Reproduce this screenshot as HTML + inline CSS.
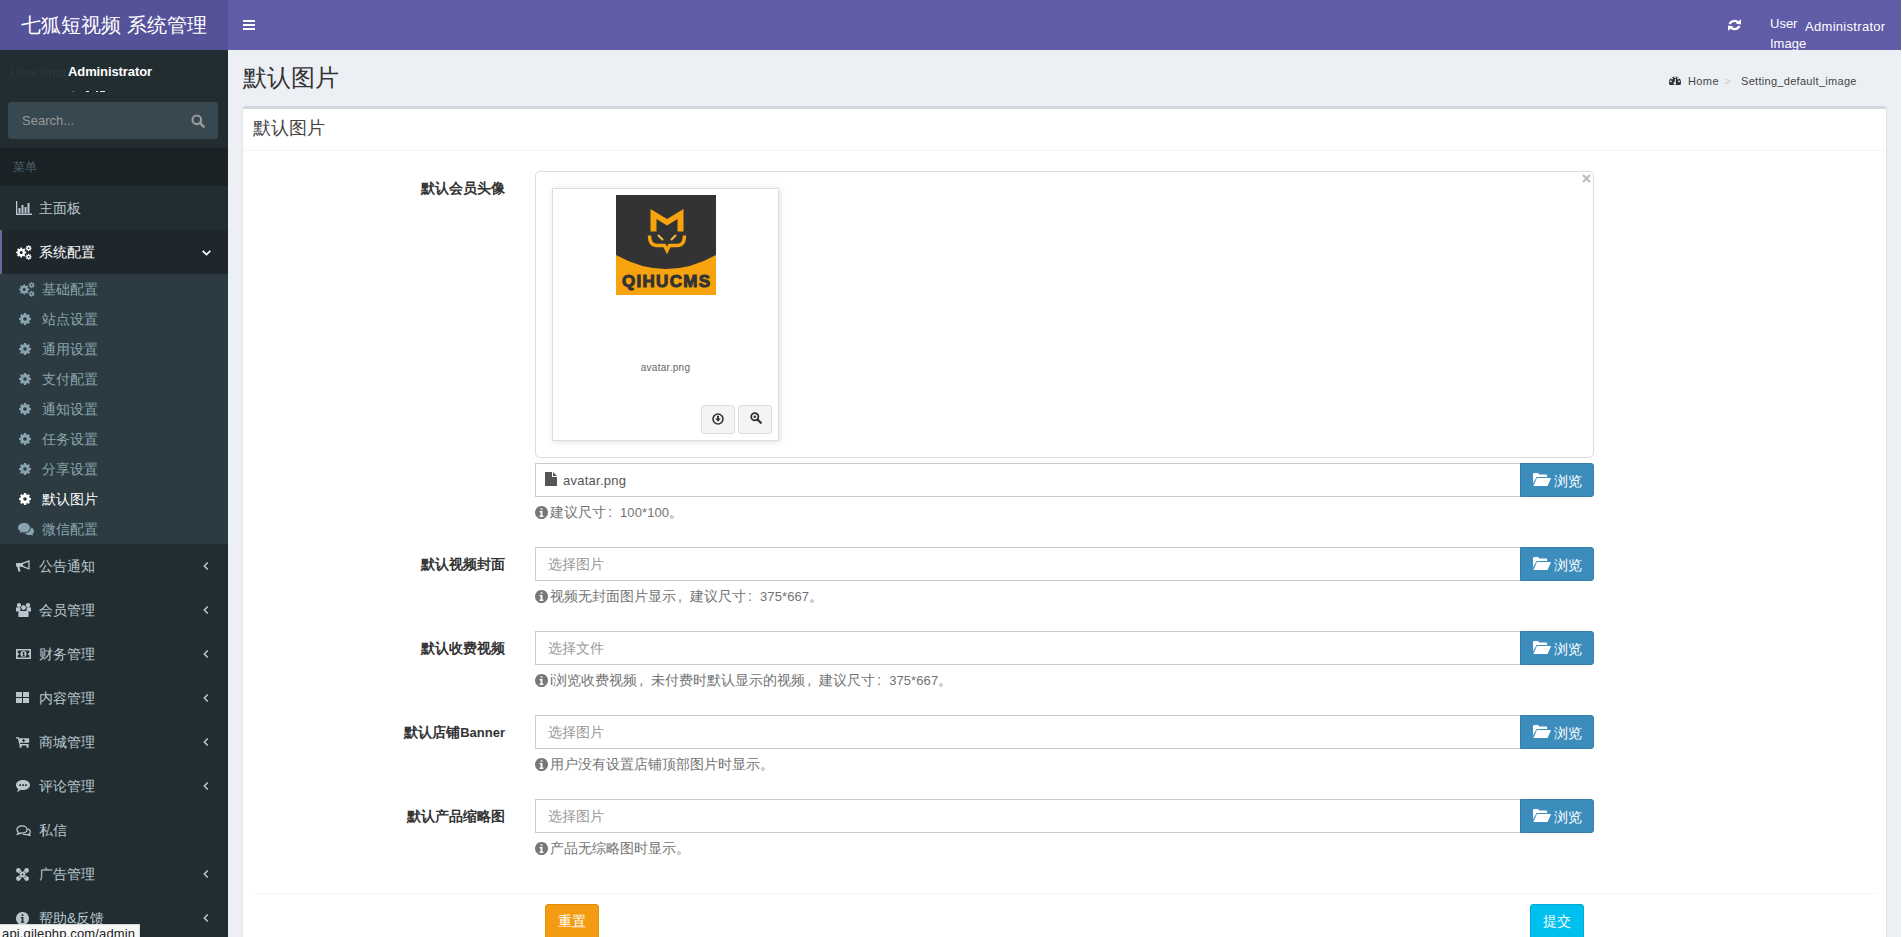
<!DOCTYPE html>
<html><head><meta charset="utf-8">
<style>
*{box-sizing:border-box;margin:0;padding:0}
html,body{width:1902px;height:937px;overflow:hidden;background:#fff;font-family:"Liberation Sans",sans-serif;font-size:14px;color:#333}
.abs{position:absolute}
#logo{left:0;top:0;width:228px;height:50px;background:#555299;color:#fff;font-size:20px;line-height:50px;padding-left:21px;white-space:nowrap}
#nav{z-index:5;left:228px;top:0;width:1673px;height:50px;background:#605ca8;color:#fff}
#side{left:0;top:50px;width:228px;height:887px;background:#222d32;overflow:hidden}
#content{left:228px;top:50px;width:1673px;height:887px;background:#ecf0f5}
.mi{position:absolute;left:0;width:228px;height:44px;white-space:nowrap}
.mi .t{position:absolute;left:39px;top:0;line-height:44px;font-size:14px}
.mi .ic{position:absolute}
.mi .ch{position:absolute}
.tv{background:#2c3b41;height:270px}
.ti{position:absolute;left:0;width:228px;height:30px;white-space:nowrap}
.ti .t{position:absolute;left:42px;top:0;line-height:30px;font-size:14px}
.ti .ic{position:absolute}
.lbl{font-weight:bold;font-size:14px;line-height:20px;color:#333;white-space:nowrap}
.hb{font-size:14px;line-height:20px;color:#737373;white-space:nowrap;display:flex;align-items:center}
.hb svg{margin-right:2px}
.inp{border:1px solid #ccc;background:#fff}
.ph{font-size:14px;line-height:20px;color:#999;white-space:nowrap}
.btnp{width:74px;height:34px;background:#3c8dbc;border:1px solid #367fa9;border-radius:0 3px 3px 0;color:#fff;font-size:14px;white-space:nowrap}
.kbtn{width:34px;height:29px;background:#f4f4f4;border:1px solid #ddd;border-radius:3px}
</style></head>
<body>
<div id="logo" class="abs">七狐短视频 系统管理</div>
<div id="nav" class="abs"><div class="abs" style="left:15px;top:20px;width:12px;height:2px;background:#fff"></div>
<div class="abs" style="left:15px;top:24px;width:12px;height:2px;background:#fff"></div>
<div class="abs" style="left:15px;top:28px;width:12px;height:2px;background:#fff"></div>
<div class="abs" style="left:1500px;top:19px;color:#fff"><svg width="13" height="12" viewBox="0 0 13 12" style="display:block"><path fill="none" stroke="currentColor" stroke-width="2.3" d="M1.6,5.2A5,4.6 0 0,1 10.2,3.6 M11.4,6.8A5,4.6 0 0,1 2.8,8.4"/><path fill="currentColor" d="M7.6,4.6L13,0.3V5.6Z M5.4,7.4L0,11.7V6.4Z"/></svg></div>
<div class="abs" style="left:1542px;top:9px;font-size:13px;line-height:30px;color:#fff">User</div><div class="abs" style="left:1542px;top:29px;font-size:13px;line-height:30px;color:#fff">Image</div>
<div class="abs" style="left:1577px;top:12px;font-size:13px;line-height:30px;color:#fff;letter-spacing:0.3px;white-space:nowrap">Administrator</div></div>
<div id="side" class="abs"><div class="abs" style="left:10px;top:15px;color:#2b373d;font-size:13px;white-space:nowrap;width:57px;overflow:hidden">User Image</div>
<div class="abs" style="left:68px;top:7px;line-height:30px;color:#fff;font-weight:bold;font-size:13px;white-space:nowrap;letter-spacing:-0.1px">Administrator</div>
<div class="abs" style="left:68px;top:41px;width:40px;height:1px;overflow:hidden"><div style="position:absolute;left:4px;top:0;width:3px;height:1px;background:#4a5a50"></div><div style="position:absolute;left:18px;top:0;width:3px;height:1px;background:#eee"></div><div style="position:absolute;left:28px;top:0;width:2px;height:1px;background:#eee"></div><div style="position:absolute;left:32px;top:0;width:5px;height:1px;background:#eee"></div></div>
<div class="abs" style="left:8px;top:52px;width:210px;height:37px;background:#374850;border-radius:3px"></div>
<div class="abs" style="left:22px;top:56px;line-height:30px;color:#999;font-size:13px">Search...</div>
<div class="abs" style="left:191px;top:64px;color:#999"><svg width="14" height="14" viewBox="0 0 14 14" style="display:block"><circle cx="5.8" cy="5.8" r="4.3" fill="none" stroke="currentColor" stroke-width="2.2"/><path stroke="currentColor" stroke-width="2.6" stroke-linecap="round" d="M9.2,9.2L12.6,12.6"/></svg></div>
<div class="abs" style="left:0;top:98px;width:228px;height:38px;background:#1a2226;color:#4b646f;font-size:12px;line-height:38px;padding-left:13px">菜单</div>
<div class="mi" style="top:136px;color:#b8c7ce"><div class="ic" style="left:16px;top:15px"><svg width="16" height="14" viewBox="0 0 16 14" style="display:block"><path fill="currentColor" d="M0,0h1.3v12.6H16V14H0Z M2.5,7h2v5h-2Z M5.5,4h2v8h-2Z M8.5,6h2v6h-2Z M11.5,2h2v10h-2Z"/></svg></div><div class="t">主面板</div></div>
<div class="abs" style="left:0;top:180px;width:228px;height:44px;background:#1e282c;border-left:2px solid #6b68a0"></div>
<div class="mi" style="top:180px;color:#fff"><div class="ic" style="left:16px;top:15px"><svg width="16" height="15" viewBox="0 0 16 15" style="display:block"><path fill-rule="evenodd" fill="currentColor" d="M4.17,3.84 L4.40,2.46 L6.00,2.46 L6.23,3.84 L7.06,4.18 L8.20,3.37 L9.33,4.50 L8.52,5.64 L8.86,6.47 L10.24,6.70 L10.24,8.30 L8.86,8.53 L8.52,9.36 L9.33,10.50 L8.20,11.63 L7.06,10.82 L6.23,11.16 L6.00,12.54 L4.40,12.54 L4.17,11.16 L3.34,10.82 L2.20,11.63 L1.07,10.50 L1.88,9.36 L1.54,8.53 L0.16,8.30 L0.16,6.70 L1.54,6.47 L1.88,5.64 L1.07,4.50 L2.20,3.37 L3.34,4.18Z M3.60,7.50 a1.60,1.60 0 1,0 3.20,0 a1.60,1.60 0 1,0 -3.20,0Z M12.00,1.08 L12.13,0.24 L13.07,0.24 L13.20,1.08 L13.67,1.28 L14.36,0.77 L15.03,1.44 L14.52,2.13 L14.72,2.60 L15.56,2.73 L15.56,3.67 L14.72,3.80 L14.52,4.27 L15.03,4.96 L14.36,5.63 L13.67,5.12 L13.20,5.32 L13.07,6.16 L12.13,6.16 L12.00,5.32 L11.53,5.12 L10.84,5.63 L10.17,4.96 L10.68,4.27 L10.48,3.80 L9.64,3.67 L9.64,2.73 L10.48,2.60 L10.68,2.13 L10.17,1.44 L10.84,0.77 L11.53,1.28Z M11.70,3.20 a0.90,0.90 0 1,0 1.80,0 a0.90,0.90 0 1,0 -1.80,0Z M12.00,9.68 L12.13,8.84 L13.07,8.84 L13.20,9.68 L13.67,9.88 L14.36,9.37 L15.03,10.04 L14.52,10.73 L14.72,11.20 L15.56,11.33 L15.56,12.27 L14.72,12.40 L14.52,12.87 L15.03,13.56 L14.36,14.23 L13.67,13.72 L13.20,13.92 L13.07,14.76 L12.13,14.76 L12.00,13.92 L11.53,13.72 L10.84,14.23 L10.17,13.56 L10.68,12.87 L10.48,12.40 L9.64,12.27 L9.64,11.33 L10.48,11.20 L10.68,10.73 L10.17,10.04 L10.84,9.37 L11.53,9.88Z M11.70,11.80 a0.90,0.90 0 1,0 1.80,0 a0.90,0.90 0 1,0 -1.80,0Z"/></svg></div><div class="t">系统配置</div><div class="ch" style="left:202px;top:20px"><svg width="9" height="6" viewBox="0 0 9 6" style="display:block"><path fill="none" stroke="currentColor" stroke-width="1.7" d="M0.7,0.8L4.5,4.6L8.3,0.8"/></svg></div></div>
<div class="abs tv" style="left:0;top:224px;width:228px"></div>
<div class="ti" style="top:224px;color:#8aa4af"><div class="ic" style="left:19px;top:8px"><svg width="16" height="15" viewBox="0 0 16 15" style="display:block"><path fill-rule="evenodd" fill="currentColor" d="M4.17,3.84 L4.40,2.46 L6.00,2.46 L6.23,3.84 L7.06,4.18 L8.20,3.37 L9.33,4.50 L8.52,5.64 L8.86,6.47 L10.24,6.70 L10.24,8.30 L8.86,8.53 L8.52,9.36 L9.33,10.50 L8.20,11.63 L7.06,10.82 L6.23,11.16 L6.00,12.54 L4.40,12.54 L4.17,11.16 L3.34,10.82 L2.20,11.63 L1.07,10.50 L1.88,9.36 L1.54,8.53 L0.16,8.30 L0.16,6.70 L1.54,6.47 L1.88,5.64 L1.07,4.50 L2.20,3.37 L3.34,4.18Z M3.60,7.50 a1.60,1.60 0 1,0 3.20,0 a1.60,1.60 0 1,0 -3.20,0Z M12.00,1.08 L12.13,0.24 L13.07,0.24 L13.20,1.08 L13.67,1.28 L14.36,0.77 L15.03,1.44 L14.52,2.13 L14.72,2.60 L15.56,2.73 L15.56,3.67 L14.72,3.80 L14.52,4.27 L15.03,4.96 L14.36,5.63 L13.67,5.12 L13.20,5.32 L13.07,6.16 L12.13,6.16 L12.00,5.32 L11.53,5.12 L10.84,5.63 L10.17,4.96 L10.68,4.27 L10.48,3.80 L9.64,3.67 L9.64,2.73 L10.48,2.60 L10.68,2.13 L10.17,1.44 L10.84,0.77 L11.53,1.28Z M11.70,3.20 a0.90,0.90 0 1,0 1.80,0 a0.90,0.90 0 1,0 -1.80,0Z M12.00,9.68 L12.13,8.84 L13.07,8.84 L13.20,9.68 L13.67,9.88 L14.36,9.37 L15.03,10.04 L14.52,10.73 L14.72,11.20 L15.56,11.33 L15.56,12.27 L14.72,12.40 L14.52,12.87 L15.03,13.56 L14.36,14.23 L13.67,13.72 L13.20,13.92 L13.07,14.76 L12.13,14.76 L12.00,13.92 L11.53,13.72 L10.84,14.23 L10.17,13.56 L10.68,12.87 L10.48,12.40 L9.64,12.27 L9.64,11.33 L10.48,11.20 L10.68,10.73 L10.17,10.04 L10.84,9.37 L11.53,9.88Z M11.70,11.80 a0.90,0.90 0 1,0 1.80,0 a0.90,0.90 0 1,0 -1.80,0Z"/></svg></div><div class="t">基础配置</div></div>
<div class="ti" style="top:254px;color:#8aa4af"><div class="ic" style="left:19px;top:9px"><svg width="13" height="13" viewBox="0 0 13 13" style="display:block"><path fill-rule="evenodd" fill="currentColor" d="M4.72,1.48 L4.95,0.09 L7.05,0.09 L7.28,1.48 L8.30,1.90 L9.43,1.08 L10.92,2.57 L10.10,3.70 L10.52,4.72 L11.91,4.95 L11.91,7.05 L10.52,7.28 L10.10,8.30 L10.92,9.43 L9.43,10.92 L8.30,10.10 L7.28,10.52 L7.05,11.91 L4.95,11.91 L4.72,10.52 L3.70,10.10 L2.57,10.92 L1.08,9.43 L1.90,8.30 L1.48,7.28 L0.09,7.05 L0.09,4.95 L1.48,4.72 L1.90,3.70 L1.08,2.57 L2.57,1.08 L3.70,1.90Z M4.20,6.00 a1.80,1.80 0 1,0 3.60,0 a1.80,1.80 0 1,0 -3.60,0Z"/></svg></div><div class="t">站点设置</div></div>
<div class="ti" style="top:284px;color:#8aa4af"><div class="ic" style="left:19px;top:9px"><svg width="13" height="13" viewBox="0 0 13 13" style="display:block"><path fill-rule="evenodd" fill="currentColor" d="M4.72,1.48 L4.95,0.09 L7.05,0.09 L7.28,1.48 L8.30,1.90 L9.43,1.08 L10.92,2.57 L10.10,3.70 L10.52,4.72 L11.91,4.95 L11.91,7.05 L10.52,7.28 L10.10,8.30 L10.92,9.43 L9.43,10.92 L8.30,10.10 L7.28,10.52 L7.05,11.91 L4.95,11.91 L4.72,10.52 L3.70,10.10 L2.57,10.92 L1.08,9.43 L1.90,8.30 L1.48,7.28 L0.09,7.05 L0.09,4.95 L1.48,4.72 L1.90,3.70 L1.08,2.57 L2.57,1.08 L3.70,1.90Z M4.20,6.00 a1.80,1.80 0 1,0 3.60,0 a1.80,1.80 0 1,0 -3.60,0Z"/></svg></div><div class="t">通用设置</div></div>
<div class="ti" style="top:314px;color:#8aa4af"><div class="ic" style="left:19px;top:9px"><svg width="13" height="13" viewBox="0 0 13 13" style="display:block"><path fill-rule="evenodd" fill="currentColor" d="M4.72,1.48 L4.95,0.09 L7.05,0.09 L7.28,1.48 L8.30,1.90 L9.43,1.08 L10.92,2.57 L10.10,3.70 L10.52,4.72 L11.91,4.95 L11.91,7.05 L10.52,7.28 L10.10,8.30 L10.92,9.43 L9.43,10.92 L8.30,10.10 L7.28,10.52 L7.05,11.91 L4.95,11.91 L4.72,10.52 L3.70,10.10 L2.57,10.92 L1.08,9.43 L1.90,8.30 L1.48,7.28 L0.09,7.05 L0.09,4.95 L1.48,4.72 L1.90,3.70 L1.08,2.57 L2.57,1.08 L3.70,1.90Z M4.20,6.00 a1.80,1.80 0 1,0 3.60,0 a1.80,1.80 0 1,0 -3.60,0Z"/></svg></div><div class="t">支付配置</div></div>
<div class="ti" style="top:344px;color:#8aa4af"><div class="ic" style="left:19px;top:9px"><svg width="13" height="13" viewBox="0 0 13 13" style="display:block"><path fill-rule="evenodd" fill="currentColor" d="M4.72,1.48 L4.95,0.09 L7.05,0.09 L7.28,1.48 L8.30,1.90 L9.43,1.08 L10.92,2.57 L10.10,3.70 L10.52,4.72 L11.91,4.95 L11.91,7.05 L10.52,7.28 L10.10,8.30 L10.92,9.43 L9.43,10.92 L8.30,10.10 L7.28,10.52 L7.05,11.91 L4.95,11.91 L4.72,10.52 L3.70,10.10 L2.57,10.92 L1.08,9.43 L1.90,8.30 L1.48,7.28 L0.09,7.05 L0.09,4.95 L1.48,4.72 L1.90,3.70 L1.08,2.57 L2.57,1.08 L3.70,1.90Z M4.20,6.00 a1.80,1.80 0 1,0 3.60,0 a1.80,1.80 0 1,0 -3.60,0Z"/></svg></div><div class="t">通知设置</div></div>
<div class="ti" style="top:374px;color:#8aa4af"><div class="ic" style="left:19px;top:9px"><svg width="13" height="13" viewBox="0 0 13 13" style="display:block"><path fill-rule="evenodd" fill="currentColor" d="M4.72,1.48 L4.95,0.09 L7.05,0.09 L7.28,1.48 L8.30,1.90 L9.43,1.08 L10.92,2.57 L10.10,3.70 L10.52,4.72 L11.91,4.95 L11.91,7.05 L10.52,7.28 L10.10,8.30 L10.92,9.43 L9.43,10.92 L8.30,10.10 L7.28,10.52 L7.05,11.91 L4.95,11.91 L4.72,10.52 L3.70,10.10 L2.57,10.92 L1.08,9.43 L1.90,8.30 L1.48,7.28 L0.09,7.05 L0.09,4.95 L1.48,4.72 L1.90,3.70 L1.08,2.57 L2.57,1.08 L3.70,1.90Z M4.20,6.00 a1.80,1.80 0 1,0 3.60,0 a1.80,1.80 0 1,0 -3.60,0Z"/></svg></div><div class="t">任务设置</div></div>
<div class="ti" style="top:404px;color:#8aa4af"><div class="ic" style="left:19px;top:9px"><svg width="13" height="13" viewBox="0 0 13 13" style="display:block"><path fill-rule="evenodd" fill="currentColor" d="M4.72,1.48 L4.95,0.09 L7.05,0.09 L7.28,1.48 L8.30,1.90 L9.43,1.08 L10.92,2.57 L10.10,3.70 L10.52,4.72 L11.91,4.95 L11.91,7.05 L10.52,7.28 L10.10,8.30 L10.92,9.43 L9.43,10.92 L8.30,10.10 L7.28,10.52 L7.05,11.91 L4.95,11.91 L4.72,10.52 L3.70,10.10 L2.57,10.92 L1.08,9.43 L1.90,8.30 L1.48,7.28 L0.09,7.05 L0.09,4.95 L1.48,4.72 L1.90,3.70 L1.08,2.57 L2.57,1.08 L3.70,1.90Z M4.20,6.00 a1.80,1.80 0 1,0 3.60,0 a1.80,1.80 0 1,0 -3.60,0Z"/></svg></div><div class="t">分享设置</div></div>
<div class="ti" style="top:434px;color:#fff"><div class="ic" style="left:19px;top:9px"><svg width="13" height="13" viewBox="0 0 13 13" style="display:block"><path fill-rule="evenodd" fill="currentColor" d="M4.72,1.48 L4.95,0.09 L7.05,0.09 L7.28,1.48 L8.30,1.90 L9.43,1.08 L10.92,2.57 L10.10,3.70 L10.52,4.72 L11.91,4.95 L11.91,7.05 L10.52,7.28 L10.10,8.30 L10.92,9.43 L9.43,10.92 L8.30,10.10 L7.28,10.52 L7.05,11.91 L4.95,11.91 L4.72,10.52 L3.70,10.10 L2.57,10.92 L1.08,9.43 L1.90,8.30 L1.48,7.28 L0.09,7.05 L0.09,4.95 L1.48,4.72 L1.90,3.70 L1.08,2.57 L2.57,1.08 L3.70,1.90Z M4.20,6.00 a1.80,1.80 0 1,0 3.60,0 a1.80,1.80 0 1,0 -3.60,0Z"/></svg></div><div class="t">默认图片</div></div>
<div class="ti" style="top:464px;color:#8aa4af"><div class="ic" style="left:18px;top:9px"><svg width="16" height="13" viewBox="0 0 16 13" style="display:block"><path fill="currentColor" d="M6,0C9.3,0 12,2.1 12,4.7C12,7.3 9.3,9.4 6,9.4C5.3,9.4 4.7,9.3 4.1,9.1L2,10.2L2.5,8.3C0.9,7.4 0,6.1 0,4.7C0,2.1 2.7,0 6,0Z"/><path fill="currentColor" d="M12.8,4.3C14.7,5 16,6.5 16,8.2C16,9.3 15.5,10.3 14.6,11L15,12.8L13.1,11.8C12.5,12 11.9,12 11.3,12C9.4,12 7.8,11.3 6.9,10.2C10.3,10 12.9,7.8 12.9,5.1Z"/></svg></div><div class="t">微信配置</div></div>
<div class="mi" style="top:494px;color:#b8c7ce"><div class="ic" style="left:16px;top:16px"><svg width="14" height="12" viewBox="0 0 14 12" style="display:block"><path fill="currentColor" d="M1,3H6.5V6.8H3.4L4.6,11.6H2.4L1.2,6.8H1Q0,6.8 0,5.8V4Q0,3 1,3Z"/><path fill-rule="evenodd" fill="currentColor" d="M5.6,3.1L13.6,0V9.8L5.6,6.7Z M7,4.1V5.7L12.3,7.9V1.9Z"/></svg></div><div class="t">公告通知</div><div class="ch" style="left:203px;top:18px"><svg width="6" height="8" viewBox="0 0 6 8" style="display:block"><path fill="none" stroke="currentColor" stroke-width="1.5" d="M4.8,0.5L1.3,4L4.8,7.5"/></svg></div></div>
<div class="mi" style="top:538px;color:#b8c7ce"><div class="ic" style="left:16px;top:15px"><svg width="15" height="14" viewBox="0 0 15 14" style="display:block"><g fill="currentColor"><circle cx="3" cy="2.2" r="2.1"/><circle cx="12" cy="2.2" r="2.1"/><path d="M0,5.2Q0,4.3 1,4.3H4.4V8.4H0Z M10.6,4.3H14Q15,4.3 15,5.2V8.4H10.6Z M2.4,9.8Q2.4,8 4.6,8H10.4Q12.6,8 12.6,9.8V14H2.4Z"/></g><circle cx="7.5" cy="4.6" r="2.8" fill="#222d32"/><circle cx="7.5" cy="4.6" r="2.4" fill="currentColor"/></svg></div><div class="t">会员管理</div><div class="ch" style="left:203px;top:18px"><svg width="6" height="8" viewBox="0 0 6 8" style="display:block"><path fill="none" stroke="currentColor" stroke-width="1.5" d="M4.8,0.5L1.3,4L4.8,7.5"/></svg></div></div>
<div class="mi" style="top:582px;color:#b8c7ce"><div class="ic" style="left:16px;top:17px"><svg width="15" height="10" viewBox="0 0 15 10" style="display:block"><path fill-rule="evenodd" fill="currentColor" d="M0,0h15v10H0Z M1.6,1.6v6.8h11.8V1.6Z M1.6,3.2L3.2,5L1.6,6.8Z M13.4,3.2L11.8,5L13.4,6.8Z"/><circle cx="7.5" cy="5" r="3.1" fill="currentColor"/><path fill="#222d32" d="M7,2.9h1.3v3.6h0.8v0.9H6.3V6.5h0.7V4.2L6.4,4.6V3.6Z"/></svg></div><div class="t">财务管理</div><div class="ch" style="left:203px;top:18px"><svg width="6" height="8" viewBox="0 0 6 8" style="display:block"><path fill="none" stroke="currentColor" stroke-width="1.5" d="M4.8,0.5L1.3,4L4.8,7.5"/></svg></div></div>
<div class="mi" style="top:626px;color:#b8c7ce"><div class="ic" style="left:16px;top:16px"><svg width="13" height="11" viewBox="0 0 13 11" style="display:block"><path fill="currentColor" d="M0,0h6v5H0Z M7,0h6v5H7Z M0,6h6v5H0Z M7,6h6v5H7Z"/></svg></div><div class="t">内容管理</div><div class="ch" style="left:203px;top:18px"><svg width="6" height="8" viewBox="0 0 6 8" style="display:block"><path fill="none" stroke="currentColor" stroke-width="1.5" d="M4.8,0.5L1.3,4L4.8,7.5"/></svg></div></div>
<div class="mi" style="top:670px;color:#b8c7ce"><div class="ic" style="left:16px;top:17px"><svg width="14" height="12" viewBox="0 0 14 12" style="display:block"><path fill="currentColor" d="M0,0.2H2.8L3.3,1.2H13.2V5.8H4.1L4.3,6.9H12.6V10.8H10.6V8.4H5.6V10.8H3.6V8.4L1.9,1.4H0Z"/><path fill="#222d32" d="M7.1,2H8.1V3.1H9.2V4H8.1V5.1H7.1V4H6V3.1H7.1Z"/></svg></div><div class="t">商城管理</div><div class="ch" style="left:203px;top:18px"><svg width="6" height="8" viewBox="0 0 6 8" style="display:block"><path fill="none" stroke="currentColor" stroke-width="1.5" d="M4.8,0.5L1.3,4L4.8,7.5"/></svg></div></div>
<div class="mi" style="top:714px;color:#b8c7ce"><div class="ic" style="left:16px;top:16px"><svg width="14" height="12" viewBox="0 0 14 12" style="display:block"><path fill-rule="evenodd" fill="currentColor" d="M7,0C11,0 14,2.2 14,5C14,7.8 11,10 7,10C6.2,10 5.4,9.9 4.7,9.7C3.6,10.8 2.2,11.7 0.8,12C1.6,11.1 2.1,10 2.3,8.9C0.9,8 0,6.6 0,5C0,2.2 3,0 7,0Z M3.3,4.2h1.7v1.7H3.3Z M6.2,4.2h1.7v1.7H6.2Z M9.1,4.2h1.7v1.7H9.1Z"/></svg></div><div class="t">评论管理</div><div class="ch" style="left:203px;top:18px"><svg width="6" height="8" viewBox="0 0 6 8" style="display:block"><path fill="none" stroke="currentColor" stroke-width="1.5" d="M4.8,0.5L1.3,4L4.8,7.5"/></svg></div></div>
<div class="mi" style="top:758px;color:#b8c7ce"><div class="ic" style="left:16px;top:17px"><svg width="15" height="11" viewBox="0 0 15 11" style="display:block"><path fill="none" stroke="currentColor" stroke-width="1.3" d="M6,0.9C8.9,0.9 11.1,2.5 11.1,4.5C11.1,6.5 8.9,8.1 6,8.1C5.4,8.1 4.9,8 4.3,7.9C3.5,8.6 2.5,9 1.5,9.2C2,8.6 2.3,8 2.3,7.2C1.3,6.5 0.9,5.5 0.9,4.5C0.9,2.5 3.1,0.9 6,0.9Z"/><path fill="none" stroke="currentColor" stroke-width="1.3" d="M11.9,3.8C13.4,4.4 14.3,5.5 14.3,6.8C14.3,7.6 13.9,8.4 13.2,9C13.2,9.6 13.5,10.1 13.9,10.5C13,10.4 12.2,10 11.6,9.5C11.1,9.6 10.6,9.7 10,9.7C8.7,9.7 7.5,9.3 6.7,8.7"/></svg></div><div class="t">私信</div></div>
<div class="mi" style="top:802px;color:#b8c7ce"><div class="ic" style="left:16px;top:16px"><svg width="13" height="13" viewBox="0 0 13 13" style="display:block"><path fill="none" stroke="currentColor" stroke-width="3.2" stroke-linecap="round" d="M2.4,2.4L10.6,10.6 M10.6,2.4L2.4,10.6"/><g fill="currentColor"><circle cx="2.4" cy="2.4" r="2.3"/><circle cx="10.6" cy="2.4" r="2.3"/><circle cx="2.4" cy="10.6" r="2.3"/><circle cx="10.6" cy="10.6" r="2.3"/></g><g fill="#222d32"><circle cx="6.5" cy="6.5" r="0.9"/><circle cx="3.9" cy="4.1" r="0.7"/><circle cx="9.1" cy="4.1" r="0.7"/><circle cx="3.9" cy="8.9" r="0.7"/><circle cx="9.1" cy="8.9" r="0.7"/></g></svg></div><div class="t">广告管理</div><div class="ch" style="left:203px;top:18px"><svg width="6" height="8" viewBox="0 0 6 8" style="display:block"><path fill="none" stroke="currentColor" stroke-width="1.5" d="M4.8,0.5L1.3,4L4.8,7.5"/></svg></div></div>
<div class="mi" style="top:846px;color:#b8c7ce"><div class="ic" style="left:16px;top:16px"><svg width="13" height="13" viewBox="0 0 13 13" style="display:block"><path fill-rule="evenodd" fill="currentColor" d="M6.5,0a6.5,6.5 0 1,0 0.01,0Z M5.6,2.2h1.8v1.7H5.6Z M4.8,5h2.6v4.6h0.9v1.2H4.8V9.6h0.9V6.2H4.8Z"/></svg></div><div class="t">帮助&反馈</div><div class="ch" style="left:203px;top:18px"><svg width="6" height="8" viewBox="0 0 6 8" style="display:block"><path fill="none" stroke="currentColor" stroke-width="1.5" d="M4.8,0.5L1.3,4L4.8,7.5"/></svg></div></div>
<div class="abs" style="left:0;top:874px;width:140px;height:20px;background:#f7f7f7;border-top:1px solid #dadada;border-right:1px solid #dadada;overflow:hidden"><div style="position:absolute;left:2px;top:-6px;font-size:13px;line-height:30px;color:#222;letter-spacing:0.15px;white-space:nowrap">api.qilephp.com/admin</div></div></div>
<div id="content" class="abs"><div class="abs" style="left:15px;top:13px;font-size:24px;line-height:30px;color:#333;white-space:nowrap">默认图片</div>
<div class="abs" style="left:1441px;top:25px;color:#444"><svg width="12" height="10" viewBox="0 0 12 10" style="display:block"><path fill="#333" d="M0.6,10A6,6 0 1,1 11.4,10Z"/><g fill="#fff"><circle cx="6" cy="2.2" r="0.9"/><circle cx="3" cy="3.4" r="0.9"/><circle cx="9" cy="3.4" r="0.9"/><circle cx="1.9" cy="6.3" r="0.9"/><circle cx="10.1" cy="6.3" r="0.9"/><circle cx="5.8" cy="8.4" r="1.2"/></g><path stroke="#fff" stroke-width="0.9" d="M5.9,8L6.6,4"/></svg></div>
<div class="abs" style="left:1460px;top:16px;font-size:11px;line-height:30px;color:#444;white-space:nowrap;letter-spacing:0.4px">Home</div>
<div class="abs" style="left:1496px;top:16px;font-size:11px;line-height:30px;color:#ccc;white-space:nowrap">&gt;</div>
<div class="abs" style="left:1513px;top:16px;font-size:11px;line-height:30px;color:#444;white-space:nowrap;letter-spacing:0.3px">Setting_default_image</div>
<div class="abs" style="left:15px;top:56px;width:1643px;height:900px;background:#fff;border-top:3px solid #d2d6de;border-radius:3px;box-shadow:-1px 0 0 #e3e3e8,1px 0 0 #e3e3e8,0 1px 1px rgba(0,0,0,0.1)"></div>
<div class="abs" style="left:25px;top:67px;font-size:18px;line-height:22px;color:#444;white-space:nowrap">默认图片</div>
<div class="abs" style="left:15px;top:100px;width:1643px;height:1px;background:#f4f4f4"></div>
<div class="abs lbl" style="left:-23px;top:128px;width:300px;text-align:right">默认会员头像</div>
<div class="abs" style="left:307px;top:121px;width:1059px;height:287px;border:1px solid #ddd;border-radius:5px"></div>
<div class="abs" style="left:1354px;top:124px;font-size:14px;color:#bbb;line-height:14px"><svg width="9" height="9" viewBox="0 0 9 9" style="display:block"><path stroke="currentColor" stroke-width="2" d="M1,1L8,8M8,1L1,8"/></svg></div>
<div class="abs" style="left:324px;top:138px;width:227px;height:253px;border:1px solid #ddd;box-shadow:1px 1px 6px 0 rgba(0,0,0,0.13)"></div>
<div class="abs" style="left:388px;top:145px"><svg width="100" height="100" viewBox="0 0 100 100" style="display:block"><rect width="100" height="100" fill="#333"/><path fill="#f7a30d" d="M0,60Q50,88 100,60V100H0Z"/><path fill="#f7a30d" d="M34.5,14L51,24L67.5,14V36.5H61.5V24L51,30.5L40.5,24V36.5H34.5Z"/><path fill="none" stroke="#f7a30d" stroke-width="3.4" d="M33.5,40.5Q33.5,50.5 41,50.5H48.5L51,55.5L53.5,50.5H61Q68.5,50.5 68.5,40.5"/><path stroke="#f0c040" stroke-width="2" stroke-linecap="round" d="M42.5,40.5L46.5,44.5 M59.5,40.5L55.5,44.5"/><text x="50" y="92" text-anchor="middle" font-family="Liberation Sans" font-weight="bold" font-size="17" fill="#333" stroke="#333" stroke-width="1" textLength="88" lengthAdjust="spacing">QIHUCMS</text></svg></div>
<div class="abs" style="left:324px;top:311px;width:227px;text-align:center;font-size:10px;line-height:14px;color:#666;letter-spacing:0.3px">avatar.png</div>
<div class="abs kbtn" style="left:473px;top:355px"><div style="position:absolute;left:10px;top:7px"><svg width="12" height="12" viewBox="0 0 12 12" style="display:block"><circle cx="6" cy="6" r="5" fill="none" stroke="#333" stroke-width="1.6"/><path fill="#333" d="M5,2.8H7V5.6H8.8L6,8.8L3.2,5.6H5Z"/></svg></div></div>
<div class="abs kbtn" style="left:510px;top:355px"><div style="position:absolute;left:11px;top:6px"><svg width="12" height="12" viewBox="0 0 12 12" style="display:block"><circle cx="4.8" cy="4.8" r="3.6" fill="none" stroke="#333" stroke-width="1.8"/><path stroke="#333" stroke-width="2.2" stroke-linecap="round" d="M7.6,7.6L10.8,10.8"/><circle cx="4.8" cy="4.8" r="1.3" fill="#333"/></svg></div></div>
<div class="abs inp" style="left:307px;top:413px;width:986px;height:34px"></div><div class="abs" style="left:317px;top:422px;color:#555"><svg width="12" height="14" viewBox="0 0 12 14" style="display:block"><path fill="currentColor" d="M0,0H7V5H12V14H0Z M8,0L12,4H8Z"/></svg></div><div class="abs" style="left:335px;top:416px;font-size:13px;line-height:30px;color:#555;letter-spacing:0.25px">avatar.png</div><div class="abs btnp" style="left:1292px;top:413px"><div style="position:absolute;left:12px;top:9px"><svg width="18" height="13" viewBox="0 0 18 13" style="display:block"><path fill="currentColor" d="M0,1.2Q0,0 1.2,0H5L6.2,1.4H13Q14.2,1.4 14.2,2.6V4H3.6L0,10.4Z M3.9,5H18L14.6,13H0.4Z"/></svg></div><div style="position:absolute;left:33px;top:7px;line-height:20px">浏览</div></div>
<div class="abs hb" style="left:307px;top:452px"><svg width="13" height="13" viewBox="0 0 13 13" style="display:block"><path fill-rule="evenodd" fill="#777" d="M6.5,0a6.5,6.5 0 1,0 0.01,0Z M5.7,2.2h1.7v1.6H5.7Z M4.6,4.9h2.8v4.7h1v1.3H4.6V9.6h1V6.2h-1Z"/></svg><span>建议尺寸<span style="display:inline-block;width:14px;padding-left:2px">:</span><span style="font-size:13px;letter-spacing:0.1px">100*100</span>。</span></div>
<div class="abs lbl" style="left:-23px;top:504px;width:300px;text-align:right">默认视频封面</div>
<div class="abs inp" style="left:307px;top:497px;width:986px;height:34px"></div><div class="abs ph" style="left:320px;top:504px">选择图片</div><div class="abs btnp" style="left:1292px;top:497px"><div style="position:absolute;left:12px;top:9px"><svg width="18" height="13" viewBox="0 0 18 13" style="display:block"><path fill="currentColor" d="M0,1.2Q0,0 1.2,0H5L6.2,1.4H13Q14.2,1.4 14.2,2.6V4H3.6L0,10.4Z M3.9,5H18L14.6,13H0.4Z"/></svg></div><div style="position:absolute;left:33px;top:7px;line-height:20px">浏览</div></div>
<div class="abs hb" style="left:307px;top:536px"><svg width="13" height="13" viewBox="0 0 13 13" style="display:block"><path fill-rule="evenodd" fill="#777" d="M6.5,0a6.5,6.5 0 1,0 0.01,0Z M5.7,2.2h1.7v1.6H5.7Z M4.6,4.9h2.8v4.7h1v1.3H4.6V9.6h1V6.2h-1Z"/></svg><span>视频无封面图片显示<span style="display:inline-block;width:14px;padding-left:2px">,</span>建议尺寸<span style="display:inline-block;width:14px;padding-left:2px">:</span><span style="font-size:13px;letter-spacing:0.1px">375*667</span>。</span></div>
<div class="abs lbl" style="left:-23px;top:588px;width:300px;text-align:right">默认收费视频</div>
<div class="abs inp" style="left:307px;top:581px;width:986px;height:34px"></div><div class="abs ph" style="left:320px;top:588px">选择文件</div><div class="abs btnp" style="left:1292px;top:581px"><div style="position:absolute;left:12px;top:9px"><svg width="18" height="13" viewBox="0 0 18 13" style="display:block"><path fill="currentColor" d="M0,1.2Q0,0 1.2,0H5L6.2,1.4H13Q14.2,1.4 14.2,2.6V4H3.6L0,10.4Z M3.9,5H18L14.6,13H0.4Z"/></svg></div><div style="position:absolute;left:33px;top:7px;line-height:20px">浏览</div></div>
<div class="abs hb" style="left:307px;top:620px"><svg width="13" height="13" viewBox="0 0 13 13" style="display:block"><path fill-rule="evenodd" fill="#777" d="M6.5,0a6.5,6.5 0 1,0 0.01,0Z M5.7,2.2h1.7v1.6H5.7Z M4.6,4.9h2.8v4.7h1v1.3H4.6V9.6h1V6.2h-1Z"/></svg><span>i浏览收费视频<span style="display:inline-block;width:14px;padding-left:2px">,</span>未付费时默认显示的视频<span style="display:inline-block;width:14px;padding-left:2px">,</span>建议尺寸<span style="display:inline-block;width:14px;padding-left:2px">:</span><span style="font-size:13px;letter-spacing:0.1px">375*667</span>。</span></div>
<div class="abs lbl" style="left:-23px;top:672px;width:300px;text-align:right">默认店铺<span style="font-size:13px">Banner</span></div>
<div class="abs inp" style="left:307px;top:665px;width:986px;height:34px"></div><div class="abs ph" style="left:320px;top:672px">选择图片</div><div class="abs btnp" style="left:1292px;top:665px"><div style="position:absolute;left:12px;top:9px"><svg width="18" height="13" viewBox="0 0 18 13" style="display:block"><path fill="currentColor" d="M0,1.2Q0,0 1.2,0H5L6.2,1.4H13Q14.2,1.4 14.2,2.6V4H3.6L0,10.4Z M3.9,5H18L14.6,13H0.4Z"/></svg></div><div style="position:absolute;left:33px;top:7px;line-height:20px">浏览</div></div>
<div class="abs hb" style="left:307px;top:704px"><svg width="13" height="13" viewBox="0 0 13 13" style="display:block"><path fill-rule="evenodd" fill="#777" d="M6.5,0a6.5,6.5 0 1,0 0.01,0Z M5.7,2.2h1.7v1.6H5.7Z M4.6,4.9h2.8v4.7h1v1.3H4.6V9.6h1V6.2h-1Z"/></svg><span>用户没有设置店铺顶部图片时显示。</span></div>
<div class="abs lbl" style="left:-23px;top:756px;width:300px;text-align:right">默认产品缩略图</div>
<div class="abs inp" style="left:307px;top:749px;width:986px;height:34px"></div><div class="abs ph" style="left:320px;top:756px">选择图片</div><div class="abs btnp" style="left:1292px;top:749px"><div style="position:absolute;left:12px;top:9px"><svg width="18" height="13" viewBox="0 0 18 13" style="display:block"><path fill="currentColor" d="M0,1.2Q0,0 1.2,0H5L6.2,1.4H13Q14.2,1.4 14.2,2.6V4H3.6L0,10.4Z M3.9,5H18L14.6,13H0.4Z"/></svg></div><div style="position:absolute;left:33px;top:7px;line-height:20px">浏览</div></div>
<div class="abs hb" style="left:307px;top:788px"><svg width="13" height="13" viewBox="0 0 13 13" style="display:block"><path fill-rule="evenodd" fill="#777" d="M6.5,0a6.5,6.5 0 1,0 0.01,0Z M5.7,2.2h1.7v1.6H5.7Z M4.6,4.9h2.8v4.7h1v1.3H4.6V9.6h1V6.2h-1Z"/></svg><span>产品无综略图时显示。</span></div>
<div class="abs" style="left:25px;top:843px;width:1623px;height:1px;background:#f4f4f4"></div>
<div class="abs" style="left:317px;top:854px;width:54px;height:40px;background:#f39c12;border:1px solid #e08e0b;border-radius:3px;color:#fff;font-size:14px;line-height:32px;text-align:center">重置</div>
<div class="abs" style="left:1302px;top:854px;width:54px;height:40px;background:#00c0ef;border:1px solid #00acd6;border-radius:3px;color:#fff;font-size:14px;line-height:32px;text-align:center">提交</div></div>
</body></html>
